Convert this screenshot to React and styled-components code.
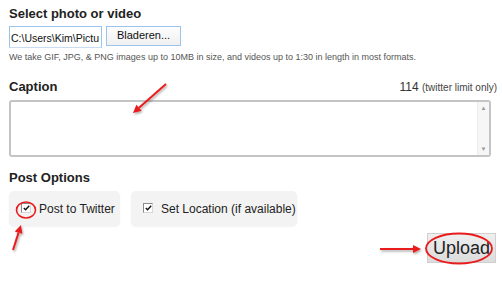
import React from 'react';
import styled, { createGlobalStyle } from 'styled-components';

const GlobalStyle = createGlobalStyle`
  html, body {
    margin: 0;
    padding: 0;
    background: #fff;
  }
  body {
    font-family: "Liberation Sans", Arial, sans-serif;
    color: #222;
  }
`;

const Page = styled.div`
  position: relative;
  width: 502px;
  height: 290px;
  overflow: hidden;
`;

const Form = styled.div`
  width: 488px;
  padding: 5px 0 0 9px;
  display: flex;
  flex-direction: column;
`;

const Heading = styled.h2`
  margin: ${(p) => p.$top || 0}px 0 0 0;
  font-size: 13px;
  line-height: 18px;
  font-weight: bold;
  color: #222;
`;

const FileRow = styled.div`
  display: flex;
  align-items: flex-start;
  gap: 4px;
  margin-top: 3px;
`;

const PathBox = styled.div`
  width: 90px;
  height: 19px;
  border: 1px solid #9cc3ec;
  border-bottom-color: #c8dcf2;
  font-size: 10.5px;
  line-height: 20px;
  padding-left: 1px;
  padding-top: 1px;
  white-space: nowrap;
  overflow: hidden;
  color: #111;
`;

const BrowseButton = styled.div`
  width: 73px;
  height: 18px;
  border: 1px solid #9cc3ec;
  background: linear-gradient(#fdfdfd, #f0f0f0);
  font-size: 11px;
  line-height: 16px;
  text-align: center;
  color: #111;
`;

const Hint = styled.div`
  font-size: 9px;
  line-height: 12px;
  color: #555;
  margin-top: 3px;
  white-space: nowrap;
`;

const LabelRow = styled.div`
  display: flex;
  justify-content: space-between;
  align-items: baseline;
  margin-top: 15px;
`;

const Counter = styled.span`
  font-size: 12px;
  color: #333;
  & small {
    font-size: 10px;
    color: #444;
  }
`;

const CaptionBox = styled.div`
  margin-top: 4px;
  width: 478px;
  height: 53px;
  border: 2px solid #c4c4c4;
  border-radius: 3px;
  display: flex;
  justify-content: flex-end;
  background: #fff;
`;

const ScrollTrack = styled.div`
  width: 11px;
  background: #f6f6f6;
  border-left: 1px solid #ececec;
  display: flex;
  flex-direction: column;
  justify-content: space-between;
  align-items: center;
  font-size: 6px;
  color: #999;
  padding: 3px 0;
`;

const Options = styled.div`
  display: flex;
  gap: 11px;
  margin-top: 4px;
`;

const Option = styled.div`
  width: ${(p) => p.$w}px;
  height: 35px;
  flex-shrink: 0;
  box-sizing: border-box;
  background: #f3f3f3;
  border-radius: 5px;
  box-shadow: 0 1px 2px rgba(0, 0, 0, 0.06);
  display: flex;
  align-items: center;
  gap: 8px;
  padding-left: 12px;
  font-size: 12px;
  white-space: nowrap;
  color: #222;
`;

const Check = styled.span`
  width: 8px;
  height: 8px;
  flex-shrink: 0;
  border: 1px solid #8a8a8a;
  border-right-color: #d8d8d8;
  border-bottom-color: #d8d8d8;
  background: #fff;
  display: inline-flex;
  align-items: center;
  justify-content: center;
  margin-top: -2px;
`;

const Footer = styled.div`
  display: flex;
  justify-content: flex-end;
  margin-top: 7px;
  padding-right: 1px;
`;

const UploadButton = styled.div`
  width: 67px;
  height: 28px;
  border: 1px solid #d0d0d0;
  background: linear-gradient(#efefef, #dcdcdc);
  font-size: 18px;
  line-height: 28px;
  text-align: center;
  color: #222;
`;

const Marks = styled.svg`
  position: absolute;
  left: 0;
  top: 0;
  pointer-events: none;
`;

const Tick = () => (
  <svg width="7" height="6" viewBox="0 0 7 6">
    <path d="M0.8 3 L2.6 4.8 L6.2 0.8" fill="none" stroke="#111" strokeWidth="1.4" />
  </svg>
);

const Arrow = ({ x1, y1, x2, y2 }) => {
  const a = Math.atan2(y2 - y1, x2 - x1);
  const l = 8;
  const w = 4;
  const bx = x2 - l * Math.cos(a);
  const by = y2 - l * Math.sin(a);
  const px = -Math.sin(a) * w;
  const py = Math.cos(a) * w;
  return (
    <g filter="url(#shadow)">
      <line x1={x1} y1={y1} x2={bx} y2={by} stroke="#e81c1c" strokeWidth="2" />
      <polygon points={`${x2},${y2} ${bx + px},${by + py} ${bx - px},${by - py}`} fill="#e81c1c" />
    </g>
  );
};

const App = () => (
  <Page>
    <GlobalStyle />
    <Form>
      <Heading>Select photo or video</Heading>
      <FileRow>
        <PathBox>C:\Users\Kim\Pictu</PathBox>
        <BrowseButton>Bladeren...</BrowseButton>
      </FileRow>
      <Hint>We take GIF, JPG, &amp; PNG images up to 10MB in size, and videos up to 1:30 in length in most formats.</Hint>
      <LabelRow>
        <Heading as="span">Caption</Heading>
        <Counter>114 <small>(twitter limit only)</small></Counter>
      </LabelRow>
      <CaptionBox>
        <ScrollTrack>
          <span>▲</span>
          <span>▼</span>
        </ScrollTrack>
      </CaptionBox>
      <Heading $top={12}>Post Options</Heading>
      <Options>
        <Option $w={111}>
          <Check><Tick /></Check>
          Post to Twitter
        </Option>
        <Option $w={166}>
          <Check><Tick /></Check>
          Set Location (if available)
        </Option>
      </Options>
      <Footer>
        <UploadButton>Upload</UploadButton>
      </Footer>
    </Form>
    <Marks width="502" height="290">
      <defs>
        <filter id="shadow" x="-50%" y="-50%" width="200%" height="200%">
          <feDropShadow dx="1" dy="1.5" stdDeviation="1" floodColor="#000" floodOpacity="0.35" />
        </filter>
      </defs>
      <Arrow x1={166} y1={84} x2={133} y2={113} />
      <Arrow x1={13} y1={250} x2={21} y2={225} />
      <Arrow x1={380} y1={249} x2={421} y2={249} />
      <ellipse cx="26" cy="210" rx="9.5" ry="8" fill="none" stroke="#e81c1c" strokeWidth="1.6" />
      <ellipse cx="459" cy="248.5" rx="33" ry="15" fill="none" stroke="#e81c1c" strokeWidth="1.8" />
    </Marks>
  </Page>
);

export default App;
